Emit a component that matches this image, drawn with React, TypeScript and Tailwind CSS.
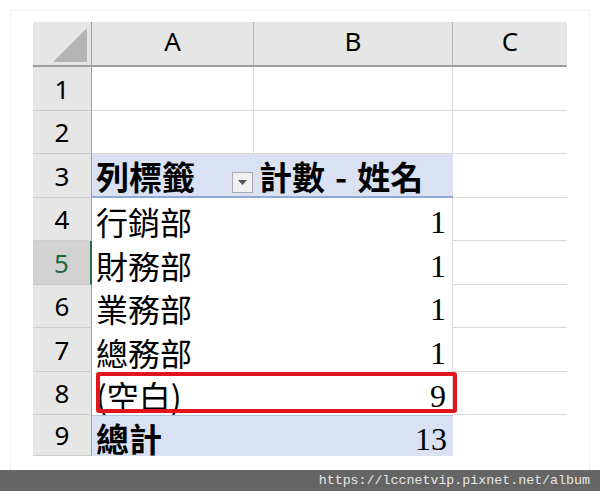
const CJK = '[font-family:"Noto_Sans_CJK_TC","Noto_Sans",sans-serif]';

type Row = {
  n: number;
  h: string;
  kind: 'empty' | 'head' | 'data' | 'total';
  label?: string;
  value?: number;
  selected?: boolean;
  marked?: boolean;
};

const ROWS: Row[] = [
  { n: 1, h: 'h-[44px]', kind: 'empty' },
  { n: 2, h: 'h-[43px]', kind: 'empty' },
  { n: 3, h: 'h-[44px]', kind: 'head' },
  { n: 4, h: 'h-[43px]', kind: 'data', label: '行銷部', value: 1 },
  { n: 5, h: 'h-[44px]', kind: 'data', label: '財務部', value: 1, selected: true },
  { n: 6, h: 'h-[43px]', kind: 'data', label: '業務部', value: 1 },
  { n: 7, h: 'h-[44px]', kind: 'data', label: '總務部', value: 1 },
  { n: 8, h: 'h-[43px]', kind: 'data', label: '(空白)', value: 9, marked: true },
  { n: 9, h: 'h-[41px]', kind: 'total', label: '總計', value: 13 },
];

function RowHeader({ row }: { row: Row }) {
  if (row.selected) {
    return (
      <div className="w-[59px] shrink-0 flex items-center justify-center bg-[#d2d2d2] border-b border-[#c6c6c6] border-r-2 border-r-[#1f7145] text-[26px] text-[#1f6b40] [font-family:'Noto_Sans',sans-serif] leading-none">
        {row.n}
      </div>
    );
  }
  return (
    <div className="w-[59px] shrink-0 flex items-center justify-center bg-[#e6e6e6] border-b border-[#cdcdcd] border-r border-r-[#9e9e9e] text-[26px] text-black [font-family:'Noto_Sans',sans-serif] leading-none">
      {row.n}
    </div>
  );
}

function Dropdown() {
  return (
    <div className="w-[21px] h-[21px] mb-[3px] mr-px shrink-0 bg-[#f0f0f0] border border-[#a9a9a9] flex items-center justify-center">
      <svg width="9" height="5" viewBox="0 0 9 5">
        <path d="M0 0h9L4.5 5z" fill="#555" />
      </svg>
    </div>
  );
}

function SheetRow({ row }: { row: Row }) {
  const colC = <div className="w-[114px] shrink-0 border-b border-[#d9d9d9]" />;

  if (row.kind === 'empty') {
    return (
      <div className={`flex ${row.h}`}>
        <RowHeader row={row} />
        <div className="w-[162px] shrink-0 border-b border-r border-[#d9d9d9]" />
        <div className="w-[199px] shrink-0 border-b border-r border-[#d9d9d9]" />
        {colC}
      </div>
    );
  }

  if (row.kind === 'head') {
    return (
      <div className={`flex ${row.h}`}>
        <RowHeader row={row} />
        <div className="w-[361px] shrink-0 flex bg-[#d9e1f2] border-b-2 border-[#8eaadb]">
          <div className={`w-[162px] flex items-end justify-between pl-[4px] ${CJK}`}>
            <span className="text-[33px] font-bold leading-none pb-[3px]">列標籤</span>
            <Dropdown />
          </div>
          <div className={`w-[199px] flex items-end pl-[5px] ${CJK}`}>
            <span className="text-[33px] font-bold leading-none pb-[3px] whitespace-nowrap">
              計數<span className="mx-[10px]">-</span>姓名
            </span>
          </div>
        </div>
        {colC}
      </div>
    );
  }

  const total = row.kind === 'total';
  return (
    <div className={`relative flex ${row.h}`}>
      <RowHeader row={row} />
      <div
        className={`w-[361px] shrink-0 flex items-end ${
          total ? 'bg-[#d9e1f2] border-t border-[#b4c6e7]' : 'bg-white border-r border-[#d9d9d9]'
        }`}
      >
        <span
          className={`w-[162px] pl-[4px] text-[32px] leading-none ${total ? 'font-bold text-[33px] pb-[1px]' : 'pb-[4px]'} ${CJK}`}
        >
          {row.label}
        </span>
        <span
          className={`flex-1 text-right pr-[6px] text-[32px] leading-none [font-family:'Liberation_Serif',serif] ${
            total ? 'pb-[1px]' : 'pb-[3px]'
          }`}
        >
          {row.value}
        </span>
      </div>
      {total ? <div className="w-[114px] shrink-0" /> : colC}
      {row.marked && (
        <div className="absolute left-[63px] top-0 w-[361px] h-[41px] border-[4px] border-[#e3141d] rounded-[3px]" />
      )}
    </div>
  );
}

export default function App() {
  return (
    <div className="w-[600px] h-[491px] bg-white flex flex-col overflow-hidden">
      <div className="flex-1 pt-[10px] px-[10px] min-h-0">
        <div className="h-full border border-b-0 border-[#f1f1f1] pl-[22px] pt-[11px]">
          <div className="flex h-[45px] bg-[#e6e6e6] border-b-2 border-[#9d9d9d] text-[26px] leading-none text-black [font-family:'Noto_Sans',sans-serif] w-[534px]">
            <div className="w-[59px] shrink-0 border-r border-[#9e9e9e] flex items-end justify-end pr-[4px] pb-[3px]">
              <svg width="34" height="34" viewBox="0 0 34 34">
                <path d="M34 0V34H0z" fill="#b4b4b4" />
              </svg>
            </div>
            <div className="w-[162px] shrink-0 border-r border-[#b5b5b5] flex items-center justify-center pb-[6px]">A</div>
            <div className="w-[199px] shrink-0 border-r border-[#b5b5b5] flex items-center justify-center pb-[6px]">B</div>
            <div className="w-[114px] shrink-0 flex items-center justify-center pb-[6px]">C</div>
          </div>
          {ROWS.map((r) => (
            <SheetRow key={r.n} row={r} />
          ))}
        </div>
      </div>
      <div className="h-[21px] bg-[#656565] flex items-center justify-end pr-[10px] text-[13.3px] text-[#e6e6e6] [font-family:'Liberation_Mono',monospace]">
        https://lccnetvip.pixnet.net/album
      </div>
    </div>
  );
}
